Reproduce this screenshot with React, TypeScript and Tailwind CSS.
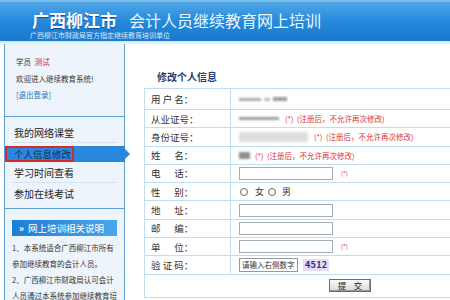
import type { ReactNode } from "react";

const FONT = "font-['Noto_Sans_CJK_SC','Noto_Sans',sans-serif]";

function Row({
  label,
  children,
  first,
}: {
  label: string;
  children: ReactNode;
  first?: boolean;
}) {
  return (
    <div
      className={`flex border-b border-[#c2ddef] ${first ? "h-[21px]" : "h-[18.3px]"}`}
    >
      <div className="w-[86px] shrink-0 border-r border-[#c2ddef] pl-[6px] flex items-center text-[9.5px] text-[#333] whitespace-pre">
        {label}
      </div>
      <div className="flex-1 flex items-center pl-[8px]">{children}</div>
    </div>
  );
}

function Note({ gap = "ml-[6px]" }: { gap?: string }) {
  return (
    <span className={`${gap} text-[7.5px] text-[#e03434] whitespace-pre`}>
      (*)  (注册后，不允许再次修改)
    </span>
  );
}

function Field({ star }: { star?: boolean }) {
  return (
    <>
      <div className="w-[94px] h-[13px] border border-[#a3adb6] bg-white" />
      {star && <span className="ml-[8px] text-[6px] text-[#e03434]">(*)</span>}
    </>
  );
}

export default function App() {
  return (
    <div className={`w-[450px] h-[300px] overflow-hidden bg-white ${FONT}`}>
      {/* header */}
      <div className="h-[41px] bg-gradient-to-b from-[#4fa6e6] via-[#2389dc] to-[#1b78cc] border-t-[2px] border-[#7cbdec]">
        <div className="flex items-end pl-[32px] pt-[6px] gap-[12px] h-[27px]">
          <span className="text-[17px] font-bold text-white leading-[19px] [text-shadow:0_1px_1px_#0d4f94]">
            广西柳江市
          </span>
          <span className="text-[16px] text-[#eef6fd] leading-[18px]">
            会计人员继续教育网上培训
          </span>
        </div>
        <div className="pl-[30px] pt-[2px] text-[7px] leading-[8px] text-[#d3e9fb]">
          广西柳江市财政局官方指定继续教育培训单位
        </div>
      </div>
      <div className="h-[3px] bg-gradient-to-b from-[#bfe8fb] to-[#eef9fe]" />

      <div className="flex">
        {/* sidebar */}
        <div className="w-[125px] shrink-0">
          <div className="ml-[4px] w-[121px] h-[256px] border-x border-[#5f9fd9] bg-[#edf4fb]">
            <div className="h-[73px] border-b border-[#5f9fd9] pl-[11px] pt-[10px] flex flex-col text-[7.5px] leading-[16.5px] text-[#333]">
              <div>
                学员 <span className="text-[#e02b2b] ml-[2px]">测试</span>
              </div>
              <div>欢迎进入继续教育系统!</div>
              <div className="text-[#2f6fb5]">[退出登录]</div>
            </div>

            <div className="pt-[6px] pb-[5px] border-b border-[#5f9fd9] text-[10px] text-[#222]">
              <div className="h-[20px] mx-[7px] pl-[2px] flex items-center border-b border-[#d5e3ef]">
                我的网络课堂
              </div>
              <div className="relative h-[20px]">
                <div className="absolute left-0 right-[-1px] top-[3px] h-[16px] bg-[#2a87de]" />
                <div className="absolute right-[-6px] top-[6px] w-0 h-0 border-y-[5px] border-y-transparent border-l-[5px] border-l-[#2a87de]" />
                <div className="absolute left-0 top-[3px] h-[16px] border-2 border-[#d42a2a] pl-[7px] pr-[1px] flex items-center whitespace-nowrap text-[9.5px] text-[#0c2a55]">
                  个人信息修改
                </div>
              </div>
              <div className="h-[20px] mx-[7px] pl-[2px] flex items-center border-b border-[#d5e3ef]">
                学习时间查看
              </div>
              <div className="h-[20px] mx-[7px] pl-[2px] flex items-center">
                参加在线考试
              </div>
            </div>

            <div className="pt-[11px] px-[7px]">
              <div className="h-[16px] bg-gradient-to-r from-[#1b7ed6] to-[#4aa6ec] flex items-center pl-[7px] text-white text-[9.5px] gap-[4px]">
                <span className="font-bold">»</span>
                <span>网上培训相关说明</span>
              </div>
              <div className="text-[7.5px] leading-[16px] text-[#333] pt-[4px] whitespace-nowrap">
                <div>1、本系统适合广西柳江市所有</div>
                <div>参加继续教育的会计人员。</div>
                <div>2、广西柳江市财政局认可会计</div>
                <div>人员通过本系统参加继续教育培</div>
              </div>
            </div>
          </div>
        </div>

        {/* main */}
        <div className="flex-1 pl-[19px] min-w-0">
          <div className="pt-[26px] pl-[13px] leading-[14px] text-[10px] font-bold text-[#22406e]">
            修改个人信息
          </div>
          <div className="mt-[4px] w-[330px] border-l border-t border-[#c2ddef]">
            <Row label="用 户 名：" first>
              <div className="flex items-center gap-[3px] blur-[1px]">
                <div className="w-[22px] h-[3px] bg-[#a9a9a9]" />
                <div className="w-[6px] h-[3px] bg-[#bbbbbb]" />
                <div className="w-[14px] h-[4px] bg-[#9e9e9e]" />
              </div>
            </Row>
            <Row label="从业证号：">
              <div className="w-[40px] h-[3px] bg-[#9c9c9c] blur-[0.8px]" />
              <Note />
            </Row>
            <Row label="身份证号：">
              <div className="w-[69px] h-[10px] bg-[#dcdcdc] blur-[1.5px]" />
              <Note />
            </Row>
            <Row label="姓 　 名：">
              <div className="w-[11px] h-[7px] bg-[#8d8d8d] blur-[1px]" />
              <Note gap="ml-[5px]" />
            </Row>
            <Row label="电 　 话：">
              <Field star />
            </Row>
            <Row label="性 　 别：">
              <div className="flex items-center text-[9px] text-[#333]">
                <span className="ml-[1px] w-[8px] h-[8px] rounded-full border border-[#666] bg-white" />
                <span className="ml-[7px]">女</span>
                <span className="ml-[4px] w-[8px] h-[8px] rounded-full border border-[#666] bg-white" />
                <span className="ml-[6px]">男</span>
              </div>
            </Row>
            <Row label="地 　 址：">
              <Field />
            </Row>
            <Row label="邮 　 编：">
              <Field />
            </Row>
            <Row label="单 　 位：">
              <Field star />
            </Row>
            <Row label="验 证 码：">
              <div className="w-[59px] h-[14px] border border-[#8f9aa4] bg-white flex items-center pl-[2px] text-[7.5px] text-[#333] whitespace-nowrap">
                请输入右侧数字
              </div>
              <span className="ml-[5px] px-[2px] bg-[#e3def2] text-[9px] font-bold leading-[12px] text-[#3b2c94] tracking-[0.3px]">
                4512
              </span>
            </Row>
            <div className="h-[23px] border-b border-[#c2ddef] pl-[184px] flex items-center">
              <div className="w-[42px] h-[13px] border border-[#6c6c6c] bg-gradient-to-b from-[#fafafa] to-[#d9d9d9] flex items-center justify-center text-[8.5px] text-[#222] whitespace-pre shadow-[inset_-1px_-1px_0_#999]">
                提    交
              </div>
            </div>
          </div>
        </div>
      </div>
    </div>
  );
}
